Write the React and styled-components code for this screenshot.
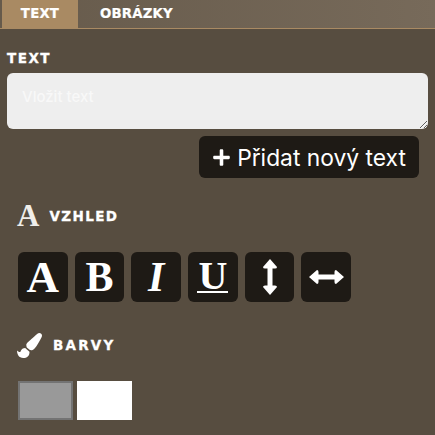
import React from 'react';
import styled, { createGlobalStyle } from 'styled-components';
import { FaPaintBrush, FaPlus } from 'react-icons/fa';

const GlobalStyle = createGlobalStyle`
  html, body {
    margin: 0;
    padding: 0;
    background: #574d40;
    overflow: hidden;
  }
`

const VerticalArrow = () => (
  <svg width="14" height="36" viewBox="0 0 14 36" fill="currentColor">
    <path d="M7 0 L14 8 Q14 9.5 12 9.5 L9.5 9.5 L9.5 26.5 L12 26.5 Q14 26.5 14 28 L7 36 L0 28 Q0 26.5 2 26.5 L4.5 26.5 L4.5 9.5 L2 9.5 Q0 9.5 0 8 Z" />
  </svg>
)

const HorizontalArrow = () => (
  <svg width="35" height="14" viewBox="0 0 35 14" fill="currentColor">
    <path d="M0 7 L8 0 Q9.5 0 9.5 2 L9.5 4.5 L25.5 4.5 L25.5 2 Q25.5 0 27 0 L35 7 L27 14 Q25.5 14 25.5 12 L25.5 9.5 L9.5 9.5 L9.5 12 Q9.5 14 8 14 Z" />
  </svg>
)

const App = () => {
  return (
    <>
      <GlobalStyle />
      <StyledPanel>
        <StyledTabs>
          <StyledTab $active>TEXT</StyledTab>
          <StyledTab>OBRÁZKY</StyledTab>
        </StyledTabs>
        <StyledContent>
          <StyledLabel>TEXT</StyledLabel>
          <StyledTextarea placeholder="Vložit text" />
          <StyledAddRow>
            <StyledAddBtn type="button">
              <FaPlus size={19} />
              Přidat nový text
            </StyledAddBtn>
          </StyledAddRow>
          <StyledHeading>
            <StyledHeadingGlyph>A</StyledHeadingGlyph>
            <StyledHeadingText>VZHLED</StyledHeadingText>
          </StyledHeading>
          <StyledTools>
            <StyledTool type="button"><StyledGlyph $size={45}>A</StyledGlyph></StyledTool>
            <StyledTool type="button"><StyledGlyph $size={42}>B</StyledGlyph></StyledTool>
            <StyledTool type="button"><StyledGlyph $size={42} $italic>I</StyledGlyph></StyledTool>
            <StyledTool type="button"><StyledUnderlined>U</StyledUnderlined></StyledTool>
            <StyledTool type="button"><VerticalArrow /></StyledTool>
            <StyledTool type="button"><HorizontalArrow /></StyledTool>
          </StyledTools>
          <StyledHeading $colors>
            <FaPaintBrush size={25} />
            <StyledHeadingText $colors>BARVY</StyledHeadingText>
          </StyledHeading>
          <StyledSwatches>
            <StyledSwatch $color="#999999" $border="#737373" />
            <StyledSwatch $color="#ffffff" $border="#ffffff" />
          </StyledSwatches>
        </StyledContent>
      </StyledPanel>
    </>
  )
}

const StyledPanel = styled.div`
  width: 435px;
  height: 435px;
  overflow: hidden;
  background: #574d40;
  color: #fff;
  font-family: "DejaVu Sans", sans-serif;
`

const StyledTabs = styled.div`
  height: 28px;
  padding-left: 2px;
  background: linear-gradient(90deg, #665a4b, #776a5a);
  border-bottom: 1px solid #a98a63;

  display: flex;
`

const StyledTab = styled.div`
  width: ${props => props.$active ? '76px' : '98px'};
  padding-left: ${props => props.$active ? '0' : '22px'};
  padding-bottom: 2px;
  background: ${props => props.$active ? '#a98a63' : 'transparent'};
  font-size: 13.3px;
  font-weight: bold;
  letter-spacing: 0.2px;
  -webkit-text-stroke: 0.2px #fff;

  display: flex;
  align-items: center;
  justify-content: ${props => props.$active ? 'center' : 'flex-start'};
`

const StyledContent = styled.div`
  padding: 21px 7px 0;

  display: flex;
  flex-direction: column;
`

const StyledLabel = styled.div`
  height: 17px;
  letter-spacing: 1.5px;
  font-size: 13.5px;
  font-weight: bold;
  line-height: 17px;
  -webkit-text-stroke: 0.3px #fff;
`

const StyledTextarea = styled.textarea`
  width: 100%;
  height: 56px;
  margin: 6px 0 0;
  box-sizing: border-box;
  padding: 14px 15px;
  border: none;
  border-radius: 6px;
  outline: none;
  background: #eeeeee;
  font-family: Inter, sans-serif;
  font-size: 15px;
  font-weight: 500;
  resize: vertical;

  &::placeholder {
    color: #f8f8f8;
  }
`

const StyledAddRow = styled.div`
  margin-top: 7px;
  padding-right: 9px;

  display: flex;
  justify-content: flex-end;
`

const StyledAddBtn = styled.button`
  all: unset;
  width: 220px;
  height: 42px;
  box-sizing: border-box;
  border-radius: 6px;
  background: #1e1a15;
  color: #fff;
  font-family: Inter, sans-serif;
  font-size: 22.8px;

  display: flex;
  align-items: center;
  justify-content: center;
  gap: 6px;
`

const StyledHeading = styled.div`
  margin-top: ${props => props.$colors ? '31px' : '26px'};
  padding-left: 10px;
  height: 24px;

  display: flex;
  align-items: center;
  gap: ${props => props.$colors ? '11px' : '10px'};
`

const StyledHeadingGlyph = styled.span`
  font-family: "Liberation Serif", serif;
  font-size: 31px;
  font-weight: bold;
  line-height: 24px;
  color: #f0eeea;
`

const StyledHeadingText = styled.span`
  letter-spacing: ${props => props.$colors ? '2.2px' : '1.4px'};
  font-size: 13.5px;
  font-weight: bold;
  -webkit-text-stroke: 0.3px #fff;
`

const StyledTools = styled.div`
  margin-top: 24px;
  padding-left: 11px;

  display: flex;
  gap: 7px;
`

const StyledTool = styled.button`
  all: unset;
  width: 49.7px;
  height: 50px;
  box-sizing: border-box;
  border-radius: 6px;
  background: #1e1a15;
  color: #fff;

  display: flex;
  align-items: center;
  justify-content: center;
`

const StyledGlyph = styled.span`
  font-family: "Liberation Serif", serif;
  font-size: ${props => props.$size}px;
  font-style: ${props => props.$italic ? 'italic' : 'normal'};
  font-weight: bold;
  line-height: 50px;
`

const StyledUnderlined = styled.span`
  padding: 0 1px;
  border-bottom: 2px solid #fff;
  font-family: "Liberation Serif", serif;
  font-size: 40px;
  font-weight: bold;
  line-height: 30px;
`

const StyledSwatches = styled.div`
  margin-top: 24px;
  padding-left: 11px;

  display: flex;
  gap: 4px;
`

const StyledSwatch = styled.div`
  width: 55px;
  height: 39px;
  box-sizing: border-box;
  border: 2px solid ${props => props.$border};
  background: ${props => props.$color};
`

export default App;
